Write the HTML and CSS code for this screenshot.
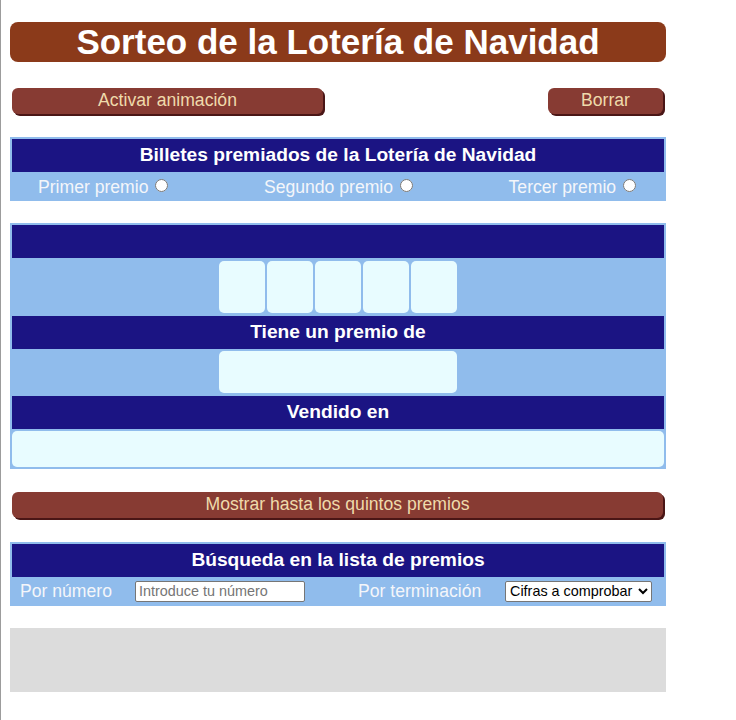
FILE: index.html
```html
<!DOCTYPE html>
<html lang="es">
<head>
<meta charset="utf-8">
<title>Sorteo de la Lotería de Navidad</title>
<link rel="stylesheet" href="styles.css">
</head>
<body>
<div class="page">
  <h1 class="title">Sorteo de la Lotería de Navidad</h1>

  <div class="btn-row">
    <button class="btn btn-anim">Activar animación</button>
    <button class="btn btn-clear">Borrar</button>
  </div>

  <div class="panel panel-prizes">
    <div class="head">Billetes premiados de la Lotería de Navidad</div>
    <div class="radio-row">
      <label class="opt">Primer premio <input type="radio" name="premio"></label>
      <label class="opt">Segundo premio <input type="radio" name="premio"></label>
      <label class="opt">Tercer premio <input type="radio" name="premio"></label>
    </div>
  </div>

  <div class="panel panel-result">
    <div class="head"></div>
    <div class="digits-row">
      <div class="cell digit"></div>
      <div class="cell digit"></div>
      <div class="cell digit"></div>
      <div class="cell digit"></div>
      <div class="cell digit"></div>
    </div>
    <div class="head">Tiene un premio de</div>
    <div class="prize-row">
      <div class="cell prize"></div>
    </div>
    <div class="head">Vendido en</div>
    <div class="place-row">
      <div class="cell place"></div>
    </div>
  </div>

  <button class="btn btn-wide">Mostrar hasta los quintos premios</button>

  <div class="panel panel-search">
    <div class="head">Búsqueda en la lista de premios</div>
    <div class="search-row">
      <span class="lbl">Por número</span>
      <input class="num-input" type="text" placeholder="Introduce tu número">
      <span class="lbl">Por terminación</span>
      <select class="digits-select">
        <option>Cifras a comprobar</option>
      </select>
    </div>
  </div>

  <div class="output"></div>
</div>
</body>
</html>
```
FILE: styles.css
```css
html {
  border-left: 1px solid #9c9c9c;
  min-height: 100vh;
  box-sizing: border-box;
}
body {
  margin: 0;
  padding: 22px 0 0 9px;
  font-family: "Liberation Sans", Arial, sans-serif;
  background: #fff;
}
.page {
  width: 656px;
}
.title {
  margin: 0;
  height: 40px;
  line-height: 39px;
  background: #8b3a1a;
  border-radius: 8px;
  color: #fff;
  font-size: 35px;
  font-weight: bold;
  text-align: center;
}
.btn {
  display: block;
  height: 26px;
  padding: 0 0 2px;
  border: none;
  border-radius: 6px;
  background: #873b33;
  color: #efdaab;
  box-shadow: 2px 2px 0 #4a1616;
  font-family: "Liberation Sans", Arial, sans-serif;
  font-size: 17.6px;
  line-height: 24px;
}
.btn-row {
  margin-top: 26px;
  display: flex;
  justify-content: space-between;
  padding: 0 3px 0 2px;
}
.btn-anim { width: 311px; }
.btn-clear { width: 115px; }
.btn-wide {
  width: 651px;
  margin: 23px 0 0 2px;
}

.panel {
  background: #90bcec;
  padding: 2px 2px 1px;
}
.panel-prizes { margin-top: 23px; }
.panel-result { margin-top: 22px; padding-bottom: 2px; }
.panel-search { margin-top: 24px; }

.head {
  height: 33px;
  line-height: 31px;
  background: #1b1483;
  color: #fff;
  font-size: 19.2px;
  font-weight: bold;
  text-align: center;
}

.radio-row {
  height: 28px;
  box-sizing: border-box;
  padding: 2px 28px 0 26px;
  display: flex;
  align-items: center;
  justify-content: space-between;
  color: #f4f6fa;
  font-size: 17.6px;
}
.opt input {
  margin: 0 0 0 2px;
  width: 13px;
  height: 13px;
  vertical-align: 1px;
}

.cell {
  background: #e8fcff;
  border-radius: 5px;
}
.digits-row {
  display: flex;
  justify-content: center;
  gap: 2px;
  padding: 3px 0;
}
.digit {
  width: 46px;
  height: 52px;
}
.prize-row {
  display: flex;
  justify-content: center;
  padding: 2px 0 3px;
}
.prize {
  width: 238px;
  height: 42px;
}
.place-row {
  padding-top: 2px;
}
.place {
  height: 36px;
}

.search-row {
  height: 28px;
  display: grid;
  grid-template-columns: 115px 223px 147px auto;
  align-items: center;
  padding-left: 8px;
  color: #f4f6fa;
  font-size: 17.6px;
}
.num-input {
  width: 170px;
  height: 21px;
  box-sizing: border-box;
  margin: 0;
  padding: 1px 3px;
  border: 1px solid #767676;
  border-radius: 2px;
  font-family: "Liberation Sans", Arial, sans-serif;
  font-size: 14.4px;
  color: #000;
  background: #fff;
}
.num-input::placeholder {
  color: #757575;
}
.digits-select {
  width: 147px;
  height: 21px;
  box-sizing: border-box;
  margin: 0;
  border: 1px solid #767676;
  border-radius: 2px;
  background: #fff;
  color: #000;
  font-family: "Liberation Sans", Arial, sans-serif;
  font-size: 14.4px;
}

.output {
  margin-top: 22px;
  height: 64px;
  background: #dcdcdc;
}
```
